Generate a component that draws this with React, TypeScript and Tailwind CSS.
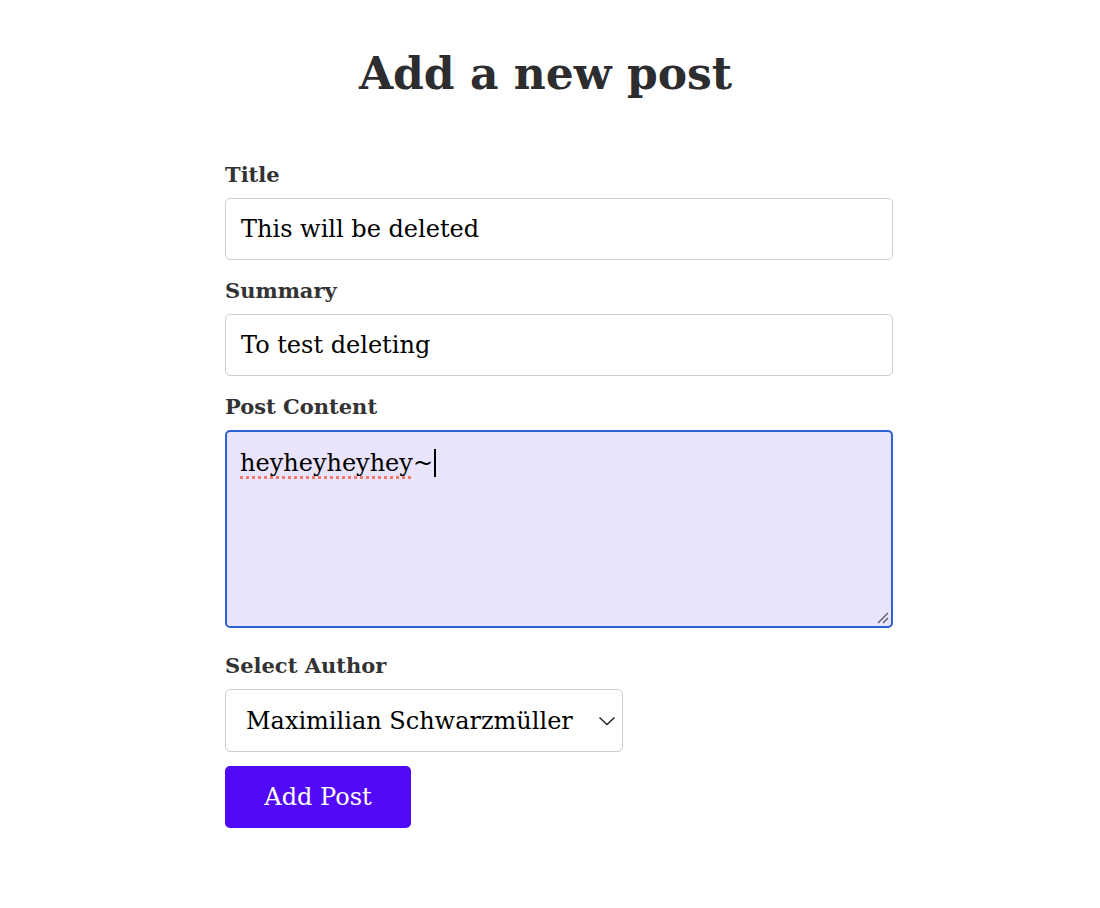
import React from "react";

const font = { fontFamily: '"DejaVu Serif", "Liberation Serif", serif' };

export default function App() {
  return (
    <div className="min-h-[908px] w-full bg-white" style={font}>
      <section className="pt-[40px]">
        <h1 className="pr-[9px] text-center text-[44px] font-bold leading-[68px] text-[#2d2d2f]">Add a new post</h1>
        <form className="ml-[225px] mt-[52px] flex w-[668px] flex-col">
          <label className="text-[21px] font-bold leading-[30px] text-[#333]">Title</label>
          <div className="mt-[8px] flex h-[62px] items-center rounded-[5px] border border-[#cfcfcf] px-[15px] text-[24px] text-black">
            This will be deleted
          </div>
          <label className="mt-[16px] text-[21px] font-bold leading-[30px] text-[#333]">Summary</label>
          <div className="mt-[8px] flex h-[62px] items-center rounded-[5px] border border-[#cfcfcf] px-[15px] text-[24px] text-black">
            To test deleting
          </div>
          <label className="mt-[16px] text-[21px] font-bold leading-[30px] text-[#333]">Post Content</label>
          <div className="relative mt-[8px] h-[198px] rounded-[5px] border-2 border-[#2f5fd0] bg-[#e9e3fb] px-[13px] pt-[11px] text-[24px] leading-[36px] text-black">
            <span className="underline decoration-[#ef7a72] decoration-dotted decoration-[3px] underline-offset-[5px] [text-decoration-skip-ink:none]">heyheyheyhey</span>~
            <span className="ml-[1px] inline-block h-[28px] w-[2px] translate-y-[6px] bg-black" />
            <svg className="absolute bottom-[2px] right-[2px]" width="14" height="14" viewBox="0 0 14 14">
              <line x1="3" y1="13" x2="13" y2="3" stroke="#555" strokeWidth="1.2" />
              <line x1="8" y1="13" x2="13" y2="8" stroke="#555" strokeWidth="1.2" />
            </svg>
          </div>
          <label className="mt-[23px] text-[21px] font-bold leading-[30px] text-[#333]">Select Author</label>
          <div className="mt-[8px] flex h-[63px] w-[398px] items-center justify-between rounded-[5px] border border-[#cfcfcf] pl-[20px] pr-[6px] text-[24px] text-black">
            <span>Maximilian Schwarzmüller</span>
            <svg width="18" height="18" viewBox="0 0 18 18" fill="none">
              <path d="M1.5 5.5 L9 12.5 L16.5 5.5" stroke="#222" strokeWidth="1.5" />
            </svg>
          </div>
          <div className="mt-[14px]">
            <button type="button" className="h-[62px] w-[186px] rounded-[5px] bg-[#5209f8] text-[24px] text-white">
              Add Post
            </button>
          </div>
        </form>
      </section>
    </div>
  );
}
